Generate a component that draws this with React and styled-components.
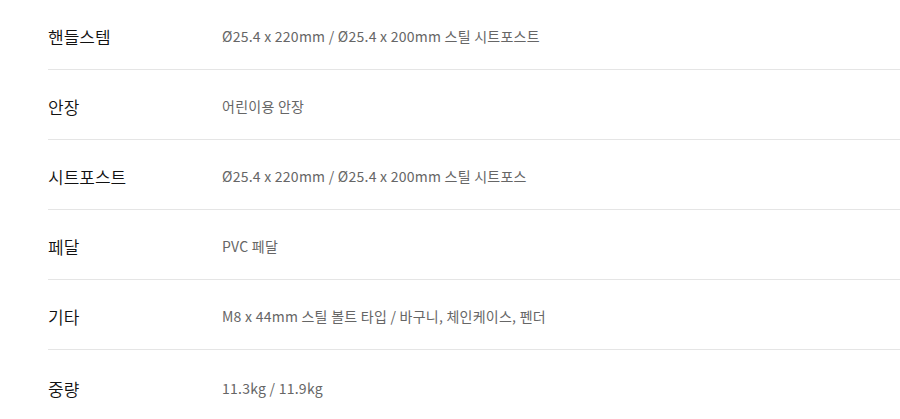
import React from 'react'
import styled, { createGlobalStyle } from 'styled-components'

const specs = [
  { key: 1, label: '핸들스템', value: 'Ø25.4 x 220mm / Ø25.4 x 200mm 스틸 시트포스트' },
  { key: 2, label: '안장', value: '어린이용 안장' },
  { key: 3, label: '시트포스트', value: 'Ø25.4 x 220mm / Ø25.4 x 200mm 스틸 시트포스' },
  { key: 4, label: '페달', value: 'PVC 페달' },
  { key: 5, label: '기타', value: 'M8 x 44mm 스틸 볼트 타입 / 바구니, 체인케이스, 펜더' },
  { key: 6, label: '중량', value: '11.3kg / 11.9kg' },
]

const GlobalStyle = createGlobalStyle`
  body {
    margin: 0;
    background: #fff;
    font-family: "Noto Sans CJK KR", "Noto Sans", sans-serif;
  }
`

const App = () => (
  <>
    <GlobalStyle />
    <SpecTable>
      {specs.map(s => (
        <SpecRow key={s.key} $last={s.key === specs.length}>
          <SpecLabel>{s.label}</SpecLabel>
          <SpecValue>{s.value}</SpecValue>
        </SpecRow>
      ))}
    </SpecTable>
  </>
)

export default App

const SpecTable = styled.div`
  padding-left: 48px;
  padding-top: 3px;
`
const SpecRow = styled.div`
  display: grid;
  grid-template-columns: 174px 1fr;
  align-items: center;
  height: ${p => (p.$last ? '70px' : '66px')};
  padding-top: 3px;
  border-bottom: ${p => (p.$last ? 'none' : '1px solid #e5e5e5')};
  &:first-child {
    height: 66px;
    padding-top: 0;
  }
`
const SpecLabel = styled.div`
  font-size: 17px;
  font-weight: 350;
  color: #111;
`
const SpecValue = styled.div`
  font-size: 14px;
  color: #666;
  letter-spacing: 0.25px;
`
